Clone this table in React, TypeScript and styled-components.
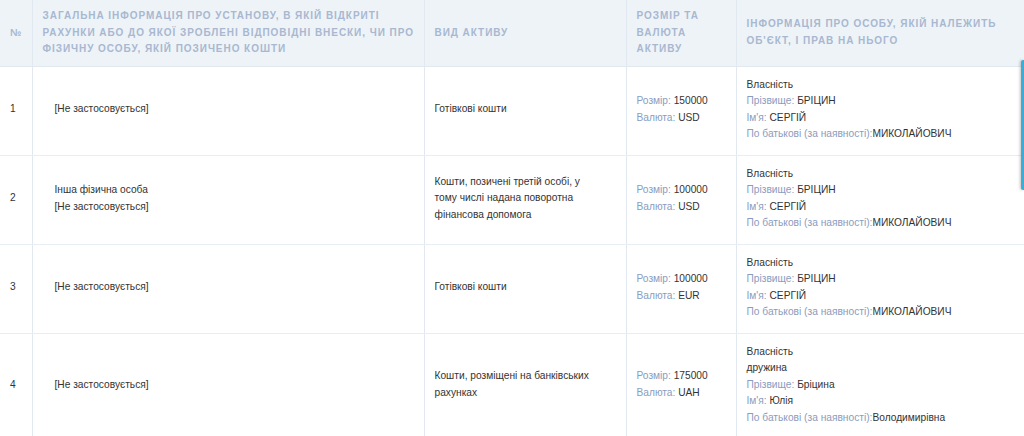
import React from 'react';
import styled, {createGlobalStyle} from "styled-components";

const GlobalStyle = createGlobalStyle`
  html, body {
    margin: 0;
    padding: 0;
    background: #fff;
    font-family: "Liberation Sans", Arial, sans-serif;
  }
`

type Field = { label?: string, value: string, tight?: boolean }

type Row = {
    id: number,
    institution: string[],
    asset: string,
    amount: string,
    currency: string,
    owner: Field[],
}

const rows: Row[] = [
    {
        id: 1,
        institution: ['[Не застосовується]'],
        asset: 'Готівкові кошти',
        amount: '150000',
        currency: 'USD',
        owner: [
            {value: 'Власність'},
            {label: 'Прізвище:', value: 'БРІЦИН'},
            {label: "Ім'я:", value: 'СЕРГІЙ'},
            {label: 'По батькові (за наявності):', value: 'МИКОЛАЙОВИЧ', tight: true},
        ]
    },
    {
        id: 2,
        institution: ['Інша фізична особа', '[Не застосовується]'],
        asset: 'Кошти, позичені третій особі, у тому числі надана поворотна фінансова допомога',
        amount: '100000',
        currency: 'USD',
        owner: [
            {value: 'Власність'},
            {label: 'Прізвище:', value: 'БРІЦИН'},
            {label: "Ім'я:", value: 'СЕРГІЙ'},
            {label: 'По батькові (за наявності):', value: 'МИКОЛАЙОВИЧ', tight: true},
        ]
    },
    {
        id: 3,
        institution: ['[Не застосовується]'],
        asset: 'Готівкові кошти',
        amount: '100000',
        currency: 'EUR',
        owner: [
            {value: 'Власність'},
            {label: 'Прізвище:', value: 'БРІЦИН'},
            {label: "Ім'я:", value: 'СЕРГІЙ'},
            {label: 'По батькові (за наявності):', value: 'МИКОЛАЙОВИЧ', tight: true},
        ]
    },
    {
        id: 4,
        institution: ['[Не застосовується]'],
        asset: 'Кошти, розміщені на банківських рахунках',
        amount: '175000',
        currency: 'UAH',
        owner: [
            {value: 'Власність'},
            {value: 'дружина'},
            {label: 'Прізвище:', value: 'Бріцина'},
            {label: "Ім'я:", value: 'Юлія'},
            {label: 'По батькові (за наявності):', value: 'Володимирівна', tight: true},
        ]
    },
]

function App() {
    return (
        <StyledApp>
            <GlobalStyle/>
            <Table>
                <colgroup>
                    <col style={{width: 32}}/>
                    <col style={{width: 392}}/>
                    <col style={{width: 202}}/>
                    <col style={{width: 110}}/>
                    <col/>
                </colgroup>
                <thead>
                <tr>
                    <Th>№</Th>
                    <Th $nowrap>
                        Загальна інформація про установу, в якій відкриті<br/>
                        рахунки або до якої зроблені відповідні внески, чи про<br/>
                        фізичну особу, якій позичено кошти
                    </Th>
                    <Th>Вид активу</Th>
                    <Th>Розмір та валюта активу</Th>
                    <Th>Інформація про особу, якій належить об'єкт, і прав на нього</Th>
                </tr>
                </thead>
                <tbody>
                {rows.map(r => (
                    <tr key={r.id}>
                        <Td>{r.id}</Td>
                        <Td>
                            <Indent>
                                {r.institution.map((line, i) => <Line key={i}>{line}</Line>)}
                            </Indent>
                        </Td>
                        <Td><AssetText>{r.asset}</AssetText></Td>
                        <Td>
                            <Line><Label>Розмір: </Label>{r.amount}</Line>
                            <Line><Label>Валюта: </Label>{r.currency}</Line>
                        </Td>
                        <Td>
                            {r.owner.map((f, i) => (
                                <Line key={i}>
                                    {f.label && <Label>{f.label}{f.tight ? '' : ' '}</Label>}
                                    {f.value}
                                </Line>
                            ))}
                        </Td>
                    </tr>
                ))}
                </tbody>
            </Table>
            <SideTab/>
        </StyledApp>
    );
}

export default App;

const StyledApp = styled.div`
  position: relative;
  width: 1024px;
  height: 436px;
  overflow: hidden;
`

const Table = styled.table`
  width: 1024px;
  border-collapse: collapse;
  table-layout: fixed;
`

const Th = styled.th<{ $nowrap?: boolean }>`
  background: #eef3f8;
  color: #a8b8d0;
  font-size: 10px;
  font-weight: 700;
  letter-spacing: 0.95px;
  line-height: 16.5px;
  text-transform: uppercase;
  text-align: left;
  vertical-align: middle;
  white-space: ${p => p.$nowrap ? 'nowrap' : 'normal'};
  padding: 8px 4px 8px 10px;
  border-right: 1px solid #e1e8f0;
  border-bottom: 1px solid #e1e8f0;

  &:last-child {
    border-right: none;
  }
`

const Td = styled.td`
  color: #333;
  font-size: 10.2px;
  line-height: 16.5px;
  vertical-align: middle;
  padding: 10px 10px 12px;
  border-right: 1px solid #e1e8f0;
  border-bottom: 1px solid #e8edf3;

  &:last-child {
    border-right: none;
  }
`

const Indent = styled.div`
  padding-left: 12px;
`

const AssetText = styled.div`
  max-width: 166px;
`

const Line = styled.div`
  white-space: nowrap;
`

const Label = styled.span`
  color: #8a9cc0;
`

const SideTab = styled.div`
  position: absolute;
  top: 60px;
  right: 0;
  width: 3px;
  height: 130px;
  background: #3aaed6;
  border-radius: 2px 0 0 2px;
  box-shadow: -1px 0 3px rgba(0, 0, 0, 0.25);
`
